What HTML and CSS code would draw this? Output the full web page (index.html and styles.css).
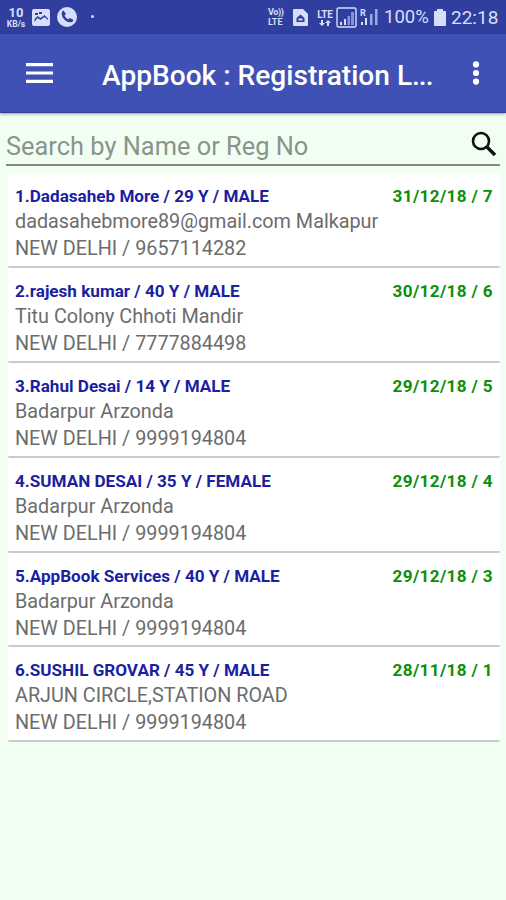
FILE: index.html
```html
<!DOCTYPE html>
<html lang="en">
<head>
<meta charset="utf-8">
<title>AppBook : Registration List</title>
<link rel="stylesheet" href="styles.css">
</head>
<body>
<header class="status">
  <div class="speed"><b>10</b><span>KB/s</span></div>
  <svg class="picture" width="18" height="17" viewBox="0 0 18 17"><rect width="18" height="17" rx="2" fill="#d8def9"/><path d="M2.500 13l3-4 3 2 4-3 3.500 3v-1.500L12.500 6 8.500 9 5.500 7l-3 3zM3 4h3v2H3zM7 3h3v2H7z" fill="#303f9f"/></svg>
  <svg class="call" width="20" height="20" viewBox="0 0 20 20"><circle cx="10" cy="10" r="10" fill="#d8def9"/><path d="M5 4.500l1.500-1L9 7 7.500 8.500c.8 1.800 2 3 3.800 3.800l1.700-1.300 3.500 2-1 1.700C10.500 17.500 3 10.500 5 4.500z" fill="#303f9f"/></svg>
  <i class="more"></i>
  <div class="indicators">
    <div class="volte"><span class="vo">Vo))</span><span>LTE</span></div>
    <svg class="sim" width="15" height="17" viewBox="0 0 15 17"><path d="M1 0h9l5 5v10.500a1.500 1.500 0 0 1-1.500 1.500h-12A1.500 1.500 0 0 1 0 15.500V1a1 1 0 0 1 1-1z" fill="#d8def9"/><path d="M7.500 5.500L3.500 9v4h8V9z" fill="#303f9f"/><path d="M5.500 9.500h4v2h-4z" fill="#d8def9"/></svg>
    <div class="lte"><span>LTE</span><svg width="12" height="6" viewBox="0 0 12 6"><path d="M3 6L0 3h2V0h2v3h2zM9 0l3 3h-2v3H8V3H6z" fill="#d8def9"/></svg></div>
    <svg class="signal" width="21" height="21" viewBox="0 0 21 21"><rect x="1" y="1" width="19" height="19" rx="1.500" fill="none" stroke="#d8def9" stroke-width="1.400"/><path d="M4 15h2v3H4zM8 12h2v6H8z" fill="#d8def9"/><path d="M11.500 9h2.500v9h-2.500zM15 5h3v13h-3z" fill="#8793d3"/></svg>
    <svg class="roaming" width="18" height="18" viewBox="0 0 18 18"><text x="0" y="8" class="roam">R</text><path d="M1 14h2v3H1zM5 10h2v7H5z" fill="#d8def9"/><path d="M10 6h2.500v11H10zM15 1h2.500v16H15z" fill="#9ba7df"/></svg>
    <span class="percent">100%</span>
    <svg class="battery" width="12" height="17" viewBox="0 0 12 17"><path d="M3 0h6v2h2a1 1 0 0 1 1 1v13a1 1 0 0 1-1 1H1a1 1 0 0 1-1-1V3a1 1 0 0 1 1-1h2z" fill="#d8def9"/></svg>
    <span class="clock">22:18</span>
  </div>
</header>
<nav class="appbar">
  <svg class="menu" width="27" height="20" viewBox="0 0 27 20"><path d="M0 0h27v3.200H0zM0 8.400h27v3.200H0zM0 16.800h27V20H0z" fill="#fff"/></svg>
  <h1>AppBook : Registration L<span class="dots">...</span></h1>
  <svg class="overflow" width="8" height="24" viewBox="0 0 8 24"><circle cx="4" cy="3.400" r="3.100" fill="#fff"/><circle cx="4" cy="12" r="3.100" fill="#fff"/><circle cx="4" cy="20.600" r="3.100" fill="#fff"/></svg>
</nav>
<main>
  <div class="search"><span class="hint">Search by Name or Reg No</span>
    <svg width="26" height="26" viewBox="0 0 26 26"><circle cx="10" cy="10" r="8" fill="none" stroke="#111" stroke-width="2.600"/><path d="M15.500 15.500L24 24" stroke="#111" stroke-width="3.400"/></svg>
  </div>
  <ul class="list">
    <li><div class="head"><b>1.Dadasaheb More / 29 Y / MALE</b><b class="date">31/12/18 / 7</b></div><p>dadasahebmore89@gmail.com Malkapur</p><p>NEW DELHI / 9657114282</p></li>
    <li><div class="head"><b>2.rajesh kumar / 40 Y / MALE</b><b class="date">30/12/18 / 6</b></div><p>Titu Colony Chhoti Mandir</p><p>NEW DELHI / 7777884498</p></li>
    <li><div class="head"><b>3.Rahul Desai / 14 Y / MALE</b><b class="date">29/12/18 / 5</b></div><p>Badarpur Arzonda</p><p>NEW DELHI / 9999194804</p></li>
    <li><div class="head"><b>4.SUMAN DESAI / 35 Y / FEMALE</b><b class="date">29/12/18 / 4</b></div><p>Badarpur Arzonda</p><p>NEW DELHI / 9999194804</p></li>
    <li><div class="head"><b>5.AppBook Services / 40 Y / MALE</b><b class="date">29/12/18 / 3</b></div><p>Badarpur Arzonda</p><p>NEW DELHI / 9999194804</p></li>
    <li><div class="head"><b>6.SUSHIL GROVAR / 45 Y / MALE</b><b class="date">28/11/18 / 1</b></div><p>ARJUN CIRCLE,STATION ROAD</p><p>NEW DELHI / 9999194804</p></li>
  </ul>
</main>
</body>
</html>
```
FILE: styles.css
```css
* { box-sizing: border-box; }
body { margin: 0; min-height: 900px; background: #f1fff3; font-family: Roboto, sans-serif; color: #6c6c6c; }
svg { display: block; flex: none; }
.status { height: 34px; background: #303f9f; display: flex; align-items: center; padding: 0 8px 0 5px; color: #d8def9; }
.speed { width: 22px; margin-right: 5px; display: flex; flex-direction: column; align-items: center; }
.speed b { font-size: 13px; font-weight: 700; line-height: 12px; padding-top: 1px; }
.speed span { font-size: 8.5px; font-weight: 700; line-height: 10px; }
.call { margin-left: 7px; }
.more { width: 3px; height: 3px; border-radius: 50%; background: #d8def9; margin: -2px 0 0 14px; }
.indicators { margin-left: auto; display: flex; align-items: center; white-space: nowrap; }
.volte { width: 17px; display: flex; flex-direction: column; font-size: 9px; line-height: 10px; font-weight: 700; }
.volte .vo { letter-spacing: -.4px; }
.sim { margin-left: 8px; }
.lte { margin-left: 8px; width: 18px; display: flex; flex-direction: column; align-items: center; font-size: 10px; line-height: 11px; font-weight: 700; letter-spacing: -.2px; }
.signal { margin-left: 2px; }
.roaming { margin-left: 3px; }
.roam { font-size: 9px; font-weight: 700; fill: #d8def9; }
.percent { margin-left: 6px; width: 46px; font-size: 18.5px; }
.battery { margin-left: 4px; }
.clock { margin-left: 5px; width: 47px; font-size: 19px; }
.appbar { position: relative; height: 79px; background: #3f51b5; border-bottom: 1px solid #303f9f; box-shadow: 0 1px 3px rgba(0,0,0,.4); display: flex; align-items: center; padding: 0 26px; }
h1 { margin: 6px 0 0 49px; color: #fff; font-size: 28.1px; line-height: 32px; font-weight: 500; white-space: nowrap; }
.dots { letter-spacing: -1px; }
.overflow { margin-left: auto; }
.search { margin: 12px 6px 0; height: 41px; border-bottom: 2px solid #818c84; display: flex; justify-content: space-between; padding: 6px 3px 0 0; }
.hint { font-size: 25.4px; line-height: 30px; color: #8a948c; white-space: nowrap; }
.list { list-style: none; margin: 7px 6px 0 8px; padding: 0; }
li { height: 94.9px; background: #fff; border-bottom: 2px solid #cbccc6; padding: 11px 7px 0; border-radius: 2px; }
.head { display: flex; justify-content: space-between; font-size: 17.1px; line-height: 24px; white-space: nowrap; color: #1b1fa0; }
.head b { font-weight: 700; }
.head .date { color: #0b8f0b; letter-spacing: .35px; }
p { margin: 0; font-size: 19.8px; line-height: 27px; white-space: nowrap; }
```
